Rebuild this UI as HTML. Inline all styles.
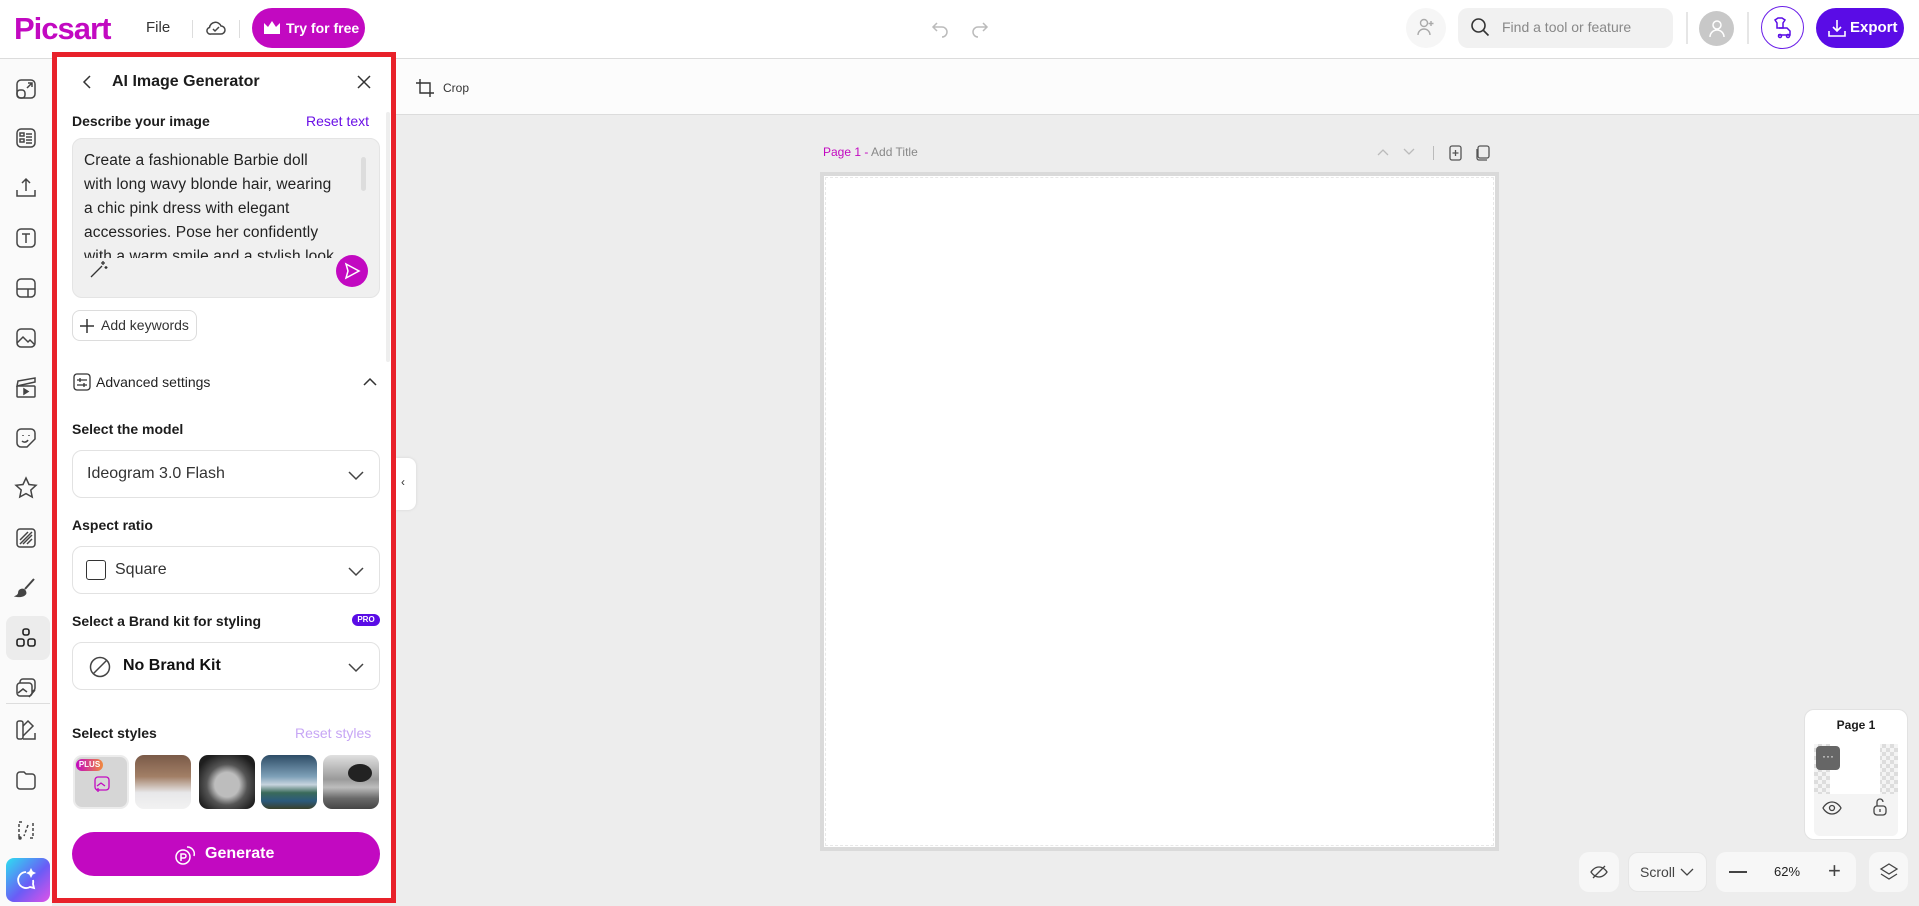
<!DOCTYPE html>
<html><head><meta charset="utf-8"><style>
*{box-sizing:border-box;margin:0;padding:0}
body{width:1919px;height:906px;overflow:hidden;background:#ededed;font-family:"Liberation Sans",sans-serif;color:#1c1c1c;position:relative}
.a{position:absolute}
svg{display:block}
.ic{position:absolute;left:14px;width:24px;height:24px}
.lbl{position:absolute;left:72px;font-size:14px;font-weight:bold;color:#1c1c1c}
.dd{position:absolute;left:72px;width:308px;height:48px;border:1px solid #e2e2e2;border-radius:10px;background:#fff}
.dd .t{position:absolute;top:14px;font-size:16px;color:#333}
.chev{position:absolute;right:14px;top:15px}
.th{position:absolute;top:755px;width:56px;height:54px;border-radius:9px;overflow:hidden}
</style></head><body>
<!-- header -->
<div class="a" style="left:0;top:0;width:1919px;height:59px;background:#fff;border-bottom:1px solid #dcdcdc"></div>
<div class="a" style="left:14px;top:11px;font-size:31px;font-weight:bold;color:#c209c1;letter-spacing:-1px">Picsart</div>
<div class="a" style="left:146px;top:19px;font-size:15px;color:#333">File</div>
<div class="a" style="left:192px;top:20px;width:1px;height:18px;background:#ddd"></div>
<svg class="a" style="left:204px;top:16px" width="24" height="24" viewBox="0 0 24 24" fill="none" stroke="#444" stroke-width="1.5"><path d="M7 18h10a4 4 0 0 0 0-8 6 6 0 0 0-11.5 1.5A3.3 3.3 0 0 0 7 18z"/><path d="M9 13l2 2 4-4"/></svg>
<div class="a" style="left:239px;top:20px;width:1px;height:18px;background:#ddd"></div>
<div class="a" style="left:252px;top:8px;width:113px;height:40px;border-radius:20px;background:#c209c1;color:#fff;font-weight:bold;font-size:14px;line-height:40px;padding-left:34px">Try for free</div>
<svg class="a" style="left:263px;top:20px" width="18" height="15" viewBox="0 0 18 15" fill="#fff"><path d="M1 3l4 4 4-6 4 6 4-4v11H1z"/></svg>
<svg class="a" style="left:930px;top:18px" width="20" height="20" viewBox="0 0 20 20" fill="none" stroke="#bbb" stroke-width="1.5"><path d="M7 5L3 9l4 4M3 9h9a5 5 0 0 1 0 10"/></svg>
<svg class="a" style="left:970px;top:18px" width="20" height="20" viewBox="0 0 20 20" fill="none" stroke="#bbb" stroke-width="1.5"><path d="M13 5l4 4-4 4M17 9H8a5 5 0 0 0 0 10"/></svg>
<div class="a" style="left:1406px;top:8px;width:40px;height:40px;border-radius:50%;background:#f6f6f6"></div>
<svg class="a" style="left:1415px;top:16px" width="22" height="22" viewBox="0 0 22 22" fill="none" stroke="#aaa" stroke-width="1.4"><circle cx="9" cy="7" r="3.5"/><path d="M3 19a6 6 0 0 1 12 0M16 5v5M13.5 7.5h5"/></svg>
<div class="a" style="left:1458px;top:8px;width:215px;height:40px;border-radius:10px;background:#f1f1f1"></div>
<svg class="a" style="left:1470px;top:17px" width="20" height="20" viewBox="0 0 20 20" fill="none" stroke="#333" stroke-width="1.6"><circle cx="8.5" cy="8.5" r="6.5"/><path d="M13.5 13.5l5 5"/></svg>
<div class="a" style="left:1502px;top:19px;font-size:14px;color:#888">Find a tool or feature</div>
<div class="a" style="left:1686px;top:12px;width:2px;height:32px;background:#e6e6e6"></div>
<div class="a" style="left:1699px;top:11px;width:35px;height:35px;border-radius:50%;background:#c8c8c8"></div>
<svg class="a" style="left:1706px;top:17px" width="22" height="22" viewBox="0 0 22 22" fill="none" stroke="#fff" stroke-width="1.5"><circle cx="11" cy="8" r="4"/><path d="M4 20a7 7 0 0 1 14 0"/></svg>
<div class="a" style="left:1747px;top:12px;width:2px;height:32px;background:#e6e6e6"></div>
<div class="a" style="left:1761px;top:6px;width:43px;height:43px;border-radius:50%;border:1.5px solid #6a1ee8"></div>
<svg class="a" style="left:1771px;top:16px" width="24" height="24" viewBox="0 0 24 24" fill="none" stroke="#5a0ce6" stroke-width="1.5"><path d="M4 4l3-2h4l3 2-2 3v5H6V7z"/><path d="M8 12h8l3 3v4H7"/><circle cx="9" cy="20" r="1.5"/><circle cx="17" cy="20" r="1.5"/></svg>
<div class="a" style="left:1816px;top:8px;width:88px;height:40px;border-radius:20px;background:#5a0ce6;color:#fff;font-weight:bold;font-size:15px;line-height:40px;padding-left:34px">Export</div>
<svg class="a" style="left:1827px;top:18px" width="20" height="20" viewBox="0 0 20 20" fill="none" stroke="#fff" stroke-width="1.6"><path d="M10 2v11M6 9l4 4 4-4M2 13v5h16v-5"/></svg>
<!-- left sidebar -->
<div class="a" style="left:0;top:59px;width:52px;height:847px;background:#fafafa"></div>
<div class="a" style="left:6px;top:616px;width:44px;height:44px;border-radius:8px;background:#ececec"></div>
<div class="a" style="left:6px;top:703px;width:44px;height:1px;background:#ddd"></div>
<div class="a" style="left:6px;top:858px;width:44px;height:44px;border-radius:8px;background:linear-gradient(135deg,#2de0f0,#6a5cf6 55%,#e052e8)"></div>
<svg class="ic" style="top:868px" viewBox="0 0 24 24" fill="none" stroke="#fff" stroke-width="1.8"><path d="M12 4a8 8 0 1 0 4 15l4 1-1-4a8 8 0 0 0 0-4"/><path d="M17 2l1 2 2 1-2 1-1 2-1-2-2-1 2-1z" fill="#fff"/></svg>
<svg class="ic" style="top:77px" viewBox="0 0 24 24" fill="none" stroke="#444" stroke-width="1.5"><rect x="3" y="3" width="18" height="18" rx="4"/><rect x="3" y="13" width="8" height="8" rx="3"/><path d="M13 11l5-5M14 6h4v4"/></svg>
<svg class="ic" style="top:126px" viewBox="0 0 24 24" fill="none" stroke="#444" stroke-width="1.5"><rect x="3" y="3" width="18" height="18" rx="4"/><rect x="6" y="7" width="4" height="3"/><rect x="6" y="13" width="4" height="3"/><path d="M12 8h6M12 11h6M12 14h6M12 17h6"/></svg>
<svg class="ic" style="top:176px" viewBox="0 0 24 24" fill="none" stroke="#444" stroke-width="1.5"><path d="M12 15V3M8 7l4-4 4 4M3 14v6h18v-6"/></svg>
<svg class="ic" style="top:226px" viewBox="0 0 24 24" fill="none" stroke="#444" stroke-width="1.5"><rect x="3" y="3" width="18" height="18" rx="4"/><path d="M8 8h8M12 8v9"/></svg>
<svg class="ic" style="top:276px" viewBox="0 0 24 24" fill="none" stroke="#444" stroke-width="1.5"><rect x="3" y="3" width="18" height="18" rx="4"/><path d="M3 13h18M14 13v8"/></svg>
<svg class="ic" style="top:326px" viewBox="0 0 24 24" fill="none" stroke="#444" stroke-width="1.5"><rect x="3" y="3" width="18" height="18" rx="4"/><path d="M3 17l6-6 5 5 2-2 5 5"/></svg>
<svg class="ic" style="top:376px" viewBox="0 0 24 24" fill="none" stroke="#444" stroke-width="1.5"><rect x="3" y="10" width="18" height="11" rx="1"/><path d="M3 10l1-5 17-3 0 4z"/><path d="M10 13v5l4-2.5z" fill="#444"/></svg>
<svg class="ic" style="top:426px" viewBox="0 0 24 24" fill="none" stroke="#444" stroke-width="1.5"><path d="M13 21H7a4 4 0 0 1-4-4V7a4 4 0 0 1 4-4h10a4 4 0 0 1 4 4v6l-8 8z"/><path d="M8 15c2 2 5 1 6-1M9 9v1M15 9v1"/></svg>
<svg class="ic" style="top:476px" viewBox="0 0 24 24" fill="none" stroke="#444" stroke-width="1.5"><path d="M12 2l3 6.5 7 .8-5.2 4.8 1.4 7L12 17.6 5.8 21l1.4-7L2 9.3l7-.8z"/></svg>
<svg class="ic" style="top:526px" viewBox="0 0 24 24" fill="none" stroke="#444" stroke-width="1.5"><rect x="3" y="3" width="18" height="18" rx="3"/><path d="M6 14l8-8M6 18l12-12M9 18l9-9M13 18l5-5"/></svg>
<svg class="ic" style="top:576px" viewBox="0 0 24 24" fill="none" stroke="#444" stroke-width="2"><path d="M20 3L11 13"/><path d="M10 14c-2-1-5 0-5 3 0 2-2 3-2 3s6 1 8-2c1-1 0-3-1-4z" fill="#444"/></svg>
<svg class="ic" style="top:626px" viewBox="0 0 24 24" fill="none" stroke="#222" stroke-width="1.6"><rect x="9" y="3" width="6" height="6" rx="2"/><rect x="3" y="13" width="7" height="7" rx="2"/><rect x="14" y="13" width="7" height="7" rx="2"/></svg>
<svg class="ic" style="top:676px" viewBox="0 0 24 24" fill="none" stroke="#444" stroke-width="1.5"><rect x="6" y="3" width="15" height="12" rx="3"/><rect x="3" y="7" width="15" height="13" rx="3" fill="#fafafa"/><path d="M4 17l5-4 4 3M15 21l6-7"/></svg>
<svg class="ic" style="top:718px" viewBox="0 0 24 24" fill="none" stroke="#444" stroke-width="1.5"><rect x="3" y="3" width="6" height="18" rx="2"/><path d="M9 8l5-5 5 5-10 10M9 21h12v-6"/></svg>
<svg class="ic" style="top:768px" viewBox="0 0 24 24" fill="none" stroke="#444" stroke-width="1.5"><path d="M3 7a3 3 0 0 1 3-3h4l2 2h6a3 3 0 0 1 3 3v9a3 3 0 0 1-3 3H6a3 3 0 0 1-3-3z"/></svg>
<svg class="ic" style="top:818px" viewBox="0 0 24 24" fill="none" stroke="#444" stroke-width="1.5"><path d="M8 4H5v16M16 20h3V4M14 7l-4 11" stroke-dasharray="3 2"/><circle cx="6" cy="20" r="1" fill="#444"/></svg>
<!-- toolbar -->
<div class="a" style="left:396px;top:59px;width:1523px;height:56px;background:#fcfcfc;border-bottom:1px solid #dcdcdc"></div>
<svg class="a" style="left:415px;top:78px" width="20" height="20" viewBox="0 0 20 20" fill="none" stroke="#333" stroke-width="1.4"><path d="M5 1v14h14M1 5h14v14"/></svg>
<div class="a" style="left:443px;top:81px;font-size:12px;color:#333">Crop</div>
<!-- collapse tab -->
<div class="a" style="left:396px;top:458px;width:20px;height:52px;background:#fff;border-radius:0 8px 8px 0;box-shadow:0 0 3px rgba(0,0,0,.1)"></div>
<div class="a" style="left:401px;top:475px;font-size:12px;color:#333">‹</div>
<!-- canvas -->
<div class="a" style="left:823px;top:145px;font-size:12px;color:#c209c1">Page 1 - <span style="color:#888">Add Title</span></div>
<svg class="a" style="left:1376px;top:146px" width="42" height="12" viewBox="0 0 42 12" fill="none" stroke="#bbb" stroke-width="1.3"><path d="M2 9l5-5 5 5M28 3l5 5 5-5"/></svg>
<div class="a" style="left:1433px;top:146px;width:1px;height:14px;background:#bbb"></div>
<svg class="a" style="left:1448px;top:144px" width="16" height="18" viewBox="0 0 16 18" fill="none" stroke="#555" stroke-width="1.3"><rect x="2" y="2" width="11" height="14" rx="2"/><path d="M7.5 6v6M4.5 9h6"/></svg>
<svg class="a" style="left:1474px;top:144px" width="18" height="18" viewBox="0 0 18 18" fill="none" stroke="#555" stroke-width="1.3"><rect x="4" y="2" width="11" height="12" rx="2"/><path d="M3 5v9a2 2 0 0 0 2 2h8"/></svg>
<div class="a" style="left:820px;top:172px;width:679px;height:679px;background:#fff;border:4px solid #dadada;outline:1px dashed #e8e8e8;outline-offset:-6px"></div>
<!-- pages panel -->
<div class="a" style="left:1804px;top:709px;width:104px;height:131px;background:#fff;border-radius:10px;border:1px solid #e2e2e2"></div>
<div class="a" style="left:1804px;top:718px;width:104px;text-align:center;font-size:12px;font-weight:bold">Page 1</div>
<div class="a" style="left:1814px;top:744px;width:84px;height:92px;background:#f4f4f4;border-radius:6px"></div>
<div class="a" style="left:1814px;top:744px;width:84px;height:50px;background:repeating-conic-gradient(#ddd 0 25%,#f4f4f4 0 50%) 0 0/8px 8px"></div>
<div class="a" style="left:1830px;top:744px;width:50px;height:50px;background:#fff"></div>
<div class="a" style="left:1816px;top:746px;width:24px;height:24px;background:#666;border-radius:4px;color:#fff;font-size:12px;text-align:center;line-height:20px">···</div>
<svg class="a" style="left:1822px;top:800px" width="20" height="16" viewBox="0 0 20 16" fill="none" stroke="#444" stroke-width="1.3"><path d="M1 8s3-6 9-6 9 6 9 6-3 6-9 6-9-6-9-6z"/><circle cx="10" cy="8" r="2.5"/></svg>
<svg class="a" style="left:1872px;top:797px" width="16" height="20" viewBox="0 0 16 20" fill="none" stroke="#444" stroke-width="1.3"><rect x="2" y="9" width="12" height="9" rx="3"/><path d="M5 9V5a3 3 0 0 1 6 0M8 12v3"/></svg>
<!-- bottom controls -->
<div class="a" style="left:1579px;top:852px;width:40px;height:40px;background:#f7f7f7;border-radius:10px"></div>
<svg class="a" style="left:1589px;top:862px" width="20" height="20" viewBox="0 0 20 20" fill="none" stroke="#444" stroke-width="1.3"><path d="M2 10s3-5 8-5 8 5 8 5-3 5-8 5-8-5-8-5zM4 16L16 4"/></svg>
<div class="a" style="left:1628px;top:852px;width:79px;height:40px;background:#f7f7f7;border-radius:10px;border:1px solid #e6e6e6;font-size:14px;color:#444;line-height:38px;padding-left:11px">Scroll</div>
<svg class="a" style="left:1680px;top:868px" width="14" height="9" viewBox="0 0 14 9" fill="none" stroke="#444" stroke-width="1.3"><path d="M1 1l6 6 6-6"/></svg>
<div class="a" style="left:1716px;top:852px;width:140px;height:40px;background:#f7f7f7;border-radius:10px"></div>
<div class="a" style="left:1729px;top:871px;width:18px;height:1.5px;background:#444"></div>
<div class="a" style="left:1774px;top:864px;font-size:13px;color:#222">62%</div>
<div class="a" style="left:1828px;top:858px;font-size:22px;color:#444">+</div>
<div class="a" style="left:1869px;top:852px;width:39px;height:40px;background:#f7f7f7;border-radius:10px"></div>
<svg class="a" style="left:1879px;top:862px" width="20" height="20" viewBox="0 0 20 20" fill="none" stroke="#444" stroke-width="1.3"><path d="M10 2l8 5-8 5-8-5zM2 12l8 5 8-5"/></svg>
<!-- panel -->
<div class="a" style="left:52px;top:52px;width:344px;height:851px;background:#fff;border:5px solid #e8212a"></div>
<div class="a" style="left:386px;top:112px;width:4px;height:250px;background:#eee;border-radius:2px"></div>
<svg class="a" style="left:80px;top:74px" width="16" height="16" viewBox="0 0 16 16" fill="none" stroke="#333" stroke-width="1.5"><path d="M10 2L4 8l6 6"/></svg>
<div class="a" style="left:112px;top:73px;font-size:16px;font-weight:bold">AI Image Generator</div>
<svg class="a" style="left:356px;top:74px" width="16" height="16" viewBox="0 0 16 16" fill="none" stroke="#333" stroke-width="1.5"><path d="M2 2l12 12M14 2L2 14"/></svg>
<div class="lbl" style="top:113px">Describe your image</div>
<div class="a" style="left:306px;top:113px;font-size:14px;color:#6a0fe6">Reset text</div>
<div class="a" style="left:72px;top:138px;width:308px;height:160px;background:#f0f0f0;border:1px solid #e4e4e4;border-radius:10px;overflow:hidden">
<div style="position:absolute;left:11px;top:10px;width:285px;height:109px;overflow:hidden;font-size:15.5px;line-height:24px;color:#222;white-space:nowrap;letter-spacing:0.1px">Create a fashionable Barbie doll<br>with long wavy blonde hair, wearing<br>a chic pink dress with elegant<br>accessories. Pose her confidently<br>with a warm smile and a stylish look</div>
<div style="position:absolute;left:288px;top:18px;width:5px;height:34px;background:#ddd;border-radius:3px"></div>
</div>
<svg class="a" style="left:89px;top:259px" width="20" height="20" viewBox="0 0 20 20" fill="none" stroke="#333" stroke-width="1.3"><path d="M2 18L13 7M14 2v4M12 4h4M17 7v3M15.5 8.5h3"/></svg>
<div class="a" style="left:336px;top:255px;width:32px;height:32px;border-radius:50%;background:#c209c1"></div>
<svg class="a" style="left:343px;top:262px" width="18" height="18" viewBox="0 0 18 18" fill="none" stroke="#fff" stroke-width="1.5"><path d="M3 2l13 7-13 7 2-7z"/></svg>
<div class="a" style="left:72px;top:310px;width:125px;height:31px;border:1px solid #dcdcdc;border-radius:8px;font-size:14px;color:#333;line-height:29px;padding-left:28px">Add keywords</div>
<svg class="a" style="left:80px;top:319px" width="14" height="14" viewBox="0 0 14 14" fill="none" stroke="#333" stroke-width="1.5"><path d="M7 0v14M0 7h14"/></svg>
<svg class="a" style="left:73px;top:373px" width="18" height="18" viewBox="0 0 18 18" fill="none" stroke="#333" stroke-width="1.3"><rect x="1" y="1" width="16" height="16" rx="3"/><path d="M4 7h10M4 12h10M7 5v4M11 10v4"/></svg>
<div class="a" style="left:96px;top:374px;font-size:14px;color:#222">Advanced settings</div>
<svg class="a" style="left:362px;top:376px" width="16" height="12" viewBox="0 0 16 12" fill="none" stroke="#333" stroke-width="1.5"><path d="M2 9l6-6 6 6"/></svg>
<div class="lbl" style="top:421px">Select the model</div>
<div class="dd" style="top:450px"><div class="t" style="left:14px">Ideogram 3.0 Flash</div><svg class="chev" width="18" height="18" viewBox="0 0 18 18" fill="none" stroke="#444" stroke-width="1.5"><path d="M2 6l7 7 7-7"/></svg></div>
<div class="lbl" style="top:517px">Aspect ratio</div>
<div class="dd" style="top:546px"><div style="position:absolute;left:13px;top:13px;width:20px;height:20px;border:1.5px solid #333;border-radius:3px"></div><div class="t" style="left:42px">Square</div><svg class="chev" width="18" height="18" viewBox="0 0 18 18" fill="none" stroke="#444" stroke-width="1.5"><path d="M2 6l7 7 7-7"/></svg></div>
<div class="lbl" style="top:613px">Select a Brand kit for styling</div>
<div class="a" style="left:352px;top:614px;width:28px;height:12px;border-radius:6px;background:#5a0ce6;color:#fff;font-size:8px;font-weight:bold;text-align:center;line-height:12px">PRO</div>
<div class="dd" style="top:642px"><svg style="position:absolute;left:16px;top:13px" width="22" height="22" viewBox="0 0 22 22" fill="none" stroke="#444" stroke-width="1.5"><circle cx="11" cy="11" r="9.5"/><path d="M4.5 17.5l13-13"/></svg><div class="t" style="left:50px;color:#111;font-weight:bold">No Brand Kit</div><svg class="chev" width="18" height="18" viewBox="0 0 18 18" fill="none" stroke="#444" stroke-width="1.5"><path d="M2 6l7 7 7-7"/></svg></div>
<div class="lbl" style="top:725px">Select styles</div>
<div class="a" style="left:295px;top:725px;font-size:14px;color:#c7a6f5">Reset styles</div>
<div class="th" style="left:73px;background:#d6d6d6;border:2px solid #ececec"></div>
<div class="a" style="left:76px;top:759px;width:27px;height:12px;border-radius:6px;background:linear-gradient(90deg,#c209c1,#f08a3c);color:#fff;font-size:8px;font-weight:bold;text-align:center;line-height:12px">PLUS</div>
<svg class="a" style="left:93px;top:775px" width="18" height="18" viewBox="0 0 18 18" fill="none" stroke="#c209c1" stroke-width="1.3"><rect x="2" y="2" width="14" height="13" rx="3"/><path d="M4 11l4-3 4 3M3 15h4M5 13v4"/></svg>
<div class="th" style="left:135px;background:linear-gradient(180deg,#7a5a48 0%,#a27f66 40%,#e8e8ea 70%,#f2f2f2 100%)"></div>
<div class="th" style="left:199px;background:radial-gradient(circle at 50% 55%,#bdbdbd 0 30%,#555 50%,#1e1e1e 80%)"></div>
<div class="th" style="left:261px;background:linear-gradient(180deg,#2d4c66 0%,#7ea0b8 40%,#c7d4de 55%,#3a6a5a 70%,#2c5a7c 85%,#39402a 100%)"></div>
<div class="th" style="left:323px;background:linear-gradient(180deg,#e0e0e0 0%,#9a9a9a 45%,#bdbdbd 60%,#6a6a6a 80%,#454545 100%)"></div>
<div class="a" style="left:348px;top:764px;width:24px;height:18px;border-radius:50%;background:#222"></div>
<div class="a" style="left:72px;top:832px;width:308px;height:44px;border-radius:22px;background:#c209c1;color:#fff;font-size:16px;font-weight:bold;line-height:44px;padding-left:133px">Generate</div>
<svg class="a" style="left:174px;top:843px" width="24" height="24" viewBox="0 0 24 24" fill="none" stroke="#fff" stroke-width="1.5"><circle cx="9" cy="14" r="7"/><path d="M13 4a7 7 0 0 1 7 9"/><path d="M7 18v-7h3a2 2 0 0 1 0 4H7"/></svg>
</body></html>
